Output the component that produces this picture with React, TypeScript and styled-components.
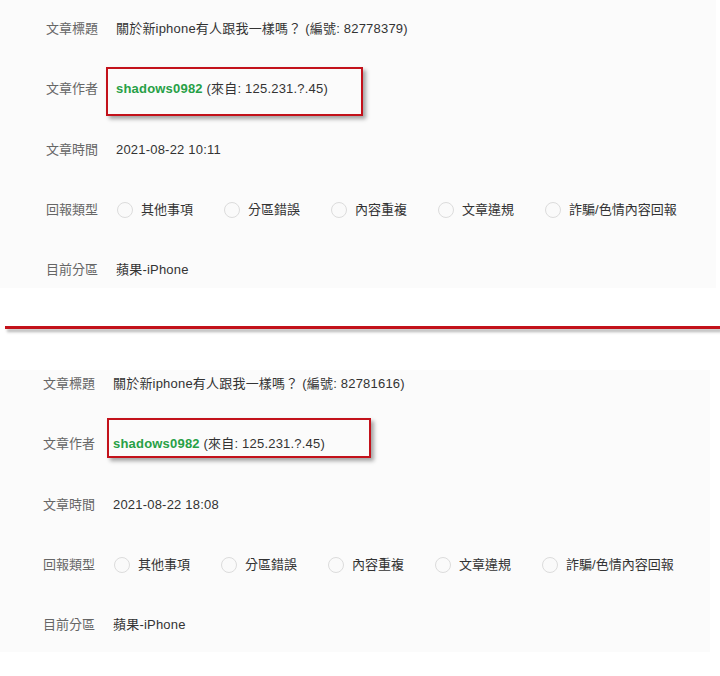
import React from 'react';
import styled, { createGlobalStyle } from 'styled-components';

const GlobalStyle = createGlobalStyle`
  html, body {
    margin: 0;
    padding: 0;
    background: #ffffff;
  }
  body {
    font-family: "Liberation Sans", Arial, "Noto Sans CJK TC", sans-serif;
    font-size: 13px;
    color: #333;
  }
`;

const Page = styled.div`
  width: 720px;
  height: 676px;
  overflow: hidden;
  position: relative;
`;

const Panel = styled.div<{ $width: number; $pt: number; $pb: number; $pl: number }>`
  width: ${p => p.$width}px;
  box-sizing: border-box;
  background: #fbfbfb;
  padding: ${p => p.$pt}px 0 ${p => p.$pb}px ${p => p.$pl}px;
  display: grid;
  grid-auto-rows: 20px;
  row-gap: 40.25px;
`;

const Row = styled.div`
  display: flex;
  align-items: center;
  gap: 18px;
  line-height: 20px;
`;

const Label = styled.div`
  width: 52px;
  flex-shrink: 0;
  color: #666;
  white-space: nowrap;
`;

const Value = styled.div`
  color: #333;
  white-space: nowrap;
  letter-spacing: 0.2px;
  position: relative;
`;

const Author = styled.span`
  color: #27a046;
  font-weight: bold;
`;

const Marker = styled.div<{ $l: number; $t: number; $w: number; $h: number }>`
  position: absolute;
  left: ${p => p.$l}px;
  top: ${p => p.$t}px;
  width: ${p => p.$w}px;
  height: ${p => p.$h}px;
  box-sizing: border-box;
  border: 2px solid #c3121b;
  box-shadow: 3px 3px 4px rgba(0, 0, 0, 0.35);
  pointer-events: none;
`;

const Options = styled.div`
  display: flex;
  align-items: center;
  padding-left: 1px;
`;

const Option = styled.label`
  display: flex;
  align-items: center;
  gap: 8px;
  margin-right: 31px;
  color: #333;
  white-space: nowrap;
`;

const Radio = styled.span`
  width: 16px;
  height: 16px;
  box-sizing: border-box;
  border-radius: 50%;
  border: 1px solid #dcdcdc;
  background: #fafafa;
  flex-shrink: 0;
`;

const Divider = styled.div`
  margin: 38px 0 0 5px;
  height: 3px;
  background: #c3121b;
  box-shadow: 2px 3px 3px rgba(0, 0, 0, 0.3);
`;

const Gap = styled.div`
  height: 41px;
`;

const reportTypes = ['其他事項', '分區錯誤', '內容重複', '文章違規', '詐騙/色情內容回報'];

interface PostInfo {
  id: string;
  time: string;
}

const Report = ({
  post,
  width,
  pt,
  pb,
  pl,
  box,
}: {
  post: PostInfo;
  width: number;
  pt: number;
  pb: number;
  pl: number;
  box: { l: number; t: number; w: number; h: number };
}) => (
  <Panel $width={width} $pt={pt} $pb={pb} $pl={pl}>
    <Row>
      <Label>文章標題</Label>
      <Value>關於新iphone有人跟我一樣嗎？ (編號: {post.id})</Value>
    </Row>
    <Row>
      <Label>文章作者</Label>
      <Value>
        <Author>shadows0982</Author> (來自: 125.231.?.45)
        <Marker $l={box.l} $t={box.t} $w={box.w} $h={box.h} />
      </Value>
    </Row>
    <Row>
      <Label>文章時間</Label>
      <Value>{post.time}</Value>
    </Row>
    <Row>
      <Label>回報類型</Label>
      <Options>
        {reportTypes.map(t => (
          <Option key={t}>
            <Radio />
            {t}
          </Option>
        ))}
      </Options>
    </Row>
    <Row>
      <Label>目前分區</Label>
      <Value>蘋果-iPhone</Value>
    </Row>
  </Panel>
);

export default function App() {
  return (
    <Page>
      <GlobalStyle />
      <Report
        post={{ id: '82778379', time: '2021-08-22 10:11' }}
        width={716}
        pt={19}
        pb={8}
        pl={46}
        box={{ l: -10, t: -12, w: 257, h: 49 }}
      />
      <Divider />
      <Gap />
      <Report
        post={{ id: '82781616', time: '2021-08-22 18:08' }}
        width={710}
        pt={4}
        pb={17}
        pl={43}
        box={{ l: -6, t: -16, w: 264, h: 40 }}
      />
    </Page>
  );
}
